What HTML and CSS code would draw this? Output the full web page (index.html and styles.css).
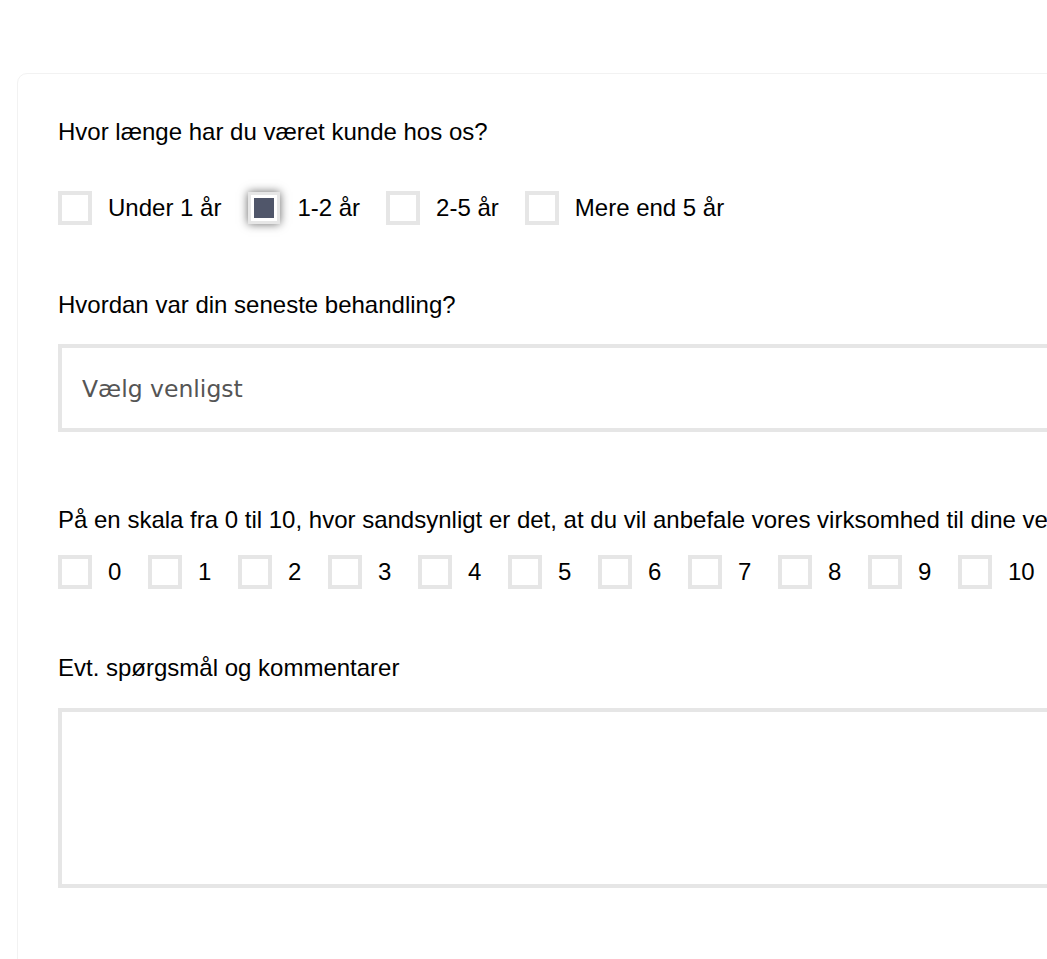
FILE: index.html
```html
<!DOCTYPE html>
<html lang="da">
<head>
<meta charset="utf-8">
<title>Spørgeskema</title>
<link rel="stylesheet" href="styles.css">
</head>
<body>
<form class="card">
  <div class="question q-duration">
    <p class="label label-gap-lg">Hvor længe har du været kunde hos os?</p>
    <div class="options">
      <label class="option"><span class="box"></span><span class="opt-text">Under 1 år</span></label>
      <label class="option"><span class="box box-checked"><span class="box-fill"></span></span><span class="opt-text">1-2 år</span></label>
      <label class="option"><span class="box"></span><span class="opt-text">2-5 år</span></label>
      <label class="option"><span class="box"></span><span class="opt-text">Mere end 5 år</span></label>
    </div>
  </div>

  <div class="question q-treatment">
    <p class="label label-gap-select">Hvordan var din seneste behandling?</p>
    <div class="select"><span class="placeholder">Vælg venligst</span></div>
  </div>

  <div class="question q-scale">
    <p class="label label-gap-sm">På en skala fra 0 til 10, hvor sandsynligt er det, at du vil anbefale vores virksomhed til dine venner og familie?</p>
    <div class="scale">
      <label class="scale-item"><span class="box"></span><span class="opt-text">0</span></label>
      <label class="scale-item"><span class="box"></span><span class="opt-text">1</span></label>
      <label class="scale-item"><span class="box"></span><span class="opt-text">2</span></label>
      <label class="scale-item"><span class="box"></span><span class="opt-text">3</span></label>
      <label class="scale-item"><span class="box"></span><span class="opt-text">4</span></label>
      <label class="scale-item"><span class="box"></span><span class="opt-text">5</span></label>
      <label class="scale-item"><span class="box"></span><span class="opt-text">6</span></label>
      <label class="scale-item"><span class="box"></span><span class="opt-text">7</span></label>
      <label class="scale-item"><span class="box"></span><span class="opt-text">8</span></label>
      <label class="scale-item"><span class="box"></span><span class="opt-text">9</span></label>
      <label class="scale-item"><span class="box"></span><span class="opt-text">10</span></label>
    </div>
  </div>

  <div class="question q-comments">
    <p class="label label-gap-md">Evt. spørgsmål og kommentarer</p>
    <div class="textarea"></div>
  </div>
</form>
</body>
</html>
```

FILE: styles.css
```css
html, body {
  margin: 0;
  padding: 0;
  overflow: hidden;
  background: #ffffff;
}

body {
  padding: 73px 0 0 17px;
  font-family: "Liberation Sans", Arial, sans-serif;
  color: #000;
}

.card {
  width: 1300px;
  min-height: 1000px;
  box-sizing: border-box;
  border: 1px solid #f2f2f2;
  border-radius: 10px;
  padding: 46px 40px 40px 40px;
}

.label {
  margin: 0;
  font-size: 24px;
  line-height: 24px;
  white-space: nowrap;
}

.label-gap-lg { margin-bottom: 47px; }
.label-gap-select { margin-bottom: 27px; }
.label-gap-md { margin-bottom: 28px; }
.label-gap-sm { margin-bottom: 23px; }

.q-duration { margin-bottom: 68px; }
.q-treatment { margin-bottom: 76px; }
.q-scale { margin-bottom: 67px; }

.options {
  display: flex;
  align-items: center;
}

.option {
  display: flex;
  align-items: center;
  margin-right: 26px;
}

.box {
  width: 34px;
  height: 34px;
  box-sizing: border-box;
  border: 4px solid #e6e6e6;
  background: #fff;
  flex: none;
}

.box-checked {
  width: 32px;
  height: 32px;
  margin: 1px;
  border-width: 3px;
  padding: 3px;
  box-shadow: 0 0 9px rgba(0, 0, 0, 0.6);
}

.box-fill {
  display: block;
  width: 20px;
  height: 20px;
  background: #50566a;
}

.opt-text {
  margin-left: 16px;
  font-size: 24px;
  line-height: 24px;
  white-space: nowrap;
}

.select {
  height: 88px;
  box-sizing: border-box;
  border: 4px solid #e6e6e6;
  display: flex;
  align-items: center;
  padding-left: 20px;
  padding-top: 2px;
}

.placeholder {
  font-family: "DejaVu Sans", Verdana, sans-serif;
  font-size: 23.5px;
  color: #555;
}

.scale {
  display: flex;
  align-items: center;
}

.scale-item {
  display: flex;
  align-items: center;
  width: 90px;
  flex: none;
}

.scale-item .opt-text {
  margin-left: 16px;
}

.textarea {
  height: 180px;
  box-sizing: border-box;
  border: 4px solid #e6e6e6;
}
```
